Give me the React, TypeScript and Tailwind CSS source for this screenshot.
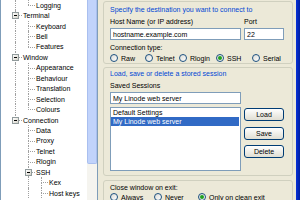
import React from 'react'

type Node = { t: string; l: number; exp?: boolean; last?: boolean; anc: boolean[] }

const tree: Node[] = [
  { t: 'Logging', l: 1, last: true, anc: [true] },
  { t: 'Terminal', l: 0, exp: true, anc: [] },
  { t: 'Keyboard', l: 1, anc: [true] },
  { t: 'Bell', l: 1, anc: [true] },
  { t: 'Features', l: 1, last: true, anc: [true] },
  { t: 'Window', l: 0, exp: true, anc: [] },
  { t: 'Appearance', l: 1, anc: [true] },
  { t: 'Behaviour', l: 1, anc: [true] },
  { t: 'Translation', l: 1, anc: [true] },
  { t: 'Selection', l: 1, anc: [true] },
  { t: 'Colours', l: 1, last: true, anc: [true] },
  { t: 'Connection', l: 0, exp: true, last: true, anc: [] },
  { t: 'Data', l: 1, anc: [false] },
  { t: 'Proxy', l: 1, anc: [false] },
  { t: 'Telnet', l: 1, anc: [false] },
  { t: 'Rlogin', l: 1, anc: [false] },
  { t: 'SSH', l: 1, exp: true, anc: [false] },
  { t: 'Kex', l: 2, anc: [false, true] },
  { t: 'Host keys', l: 2, anc: [false, true] },
]

function TreeRow({ n }: { n: Node }) {
  return (
    <div className="flex items-center h-[10.45px] pl-[7.5px]">
      {n.anc.map((on, i) => (
        <span key={i} className="relative w-[13px] h-full shrink-0">
          {on && <span className="absolute left-[6px] top-0 bottom-0 border-l border-dotted border-[#a0a0a0]" />}
        </span>
      ))}
      <span className="relative w-[13px] h-full shrink-0">
        <span className="absolute left-[6px] top-0 h-1/2 border-l border-dotted border-[#a0a0a0]" />
        {!n.last && <span className="absolute left-[6px] top-1/2 bottom-0 border-l border-dotted border-[#a0a0a0]" />}
        <span className="absolute left-[6px] right-0 top-[5px] border-t border-dotted border-[#a0a0a0]" />
        {n.exp && (
          <span className="absolute left-[3px] top-[2px] w-[7px] h-[7px] border border-[#919b9c] bg-linear-to-br from-white to-[#d6d3c8] flex items-center justify-center">
            <span className="w-[3px] h-px bg-black" />
          </span>
        )}
      </span>
      <span className="ml-[1.5px] whitespace-nowrap leading-none text-black">{n.t}</span>
    </div>
  )
}

function Radio({ on }: { on?: boolean }) {
  return (
    <span className="w-[8px] h-[8px] rounded-full border border-[#1c5180] bg-linear-to-br from-[#dcdcd6] to-white shrink-0 flex items-center justify-center">
      {on && <span className="w-[4px] h-[4px] rounded-full bg-[#21a121]" />}
    </span>
  )
}

function RadioItem({ label, on, w }: { label: string; on?: boolean; w: string }) {
  return (
    <div className={`flex items-center gap-[3px] shrink-0 ${w}`}>
      <Radio on={on} />
      <span className="whitespace-nowrap leading-none">{label}</span>
    </div>
  )
}

function Btn({ label }: { label: string }) {
  return (
    <div className="h-[13px] w-[40px] rounded-[3px] border border-[#003c74] bg-linear-to-b from-white to-[#e0ded3] flex items-center justify-center leading-none">
      {label}
    </div>
  )
}

export default function App() {
  return (
    <div className="w-[300px] h-[200px] overflow-hidden flex bg-[#ece9d8] text-[7px] text-black font-['Liberation_Sans',Arial,sans-serif]">
      {/* Tree */}
      <div className="w-[98px] h-full flex border-l border-r border-[#7f9db9] bg-white shrink-0">
        <div className="w-[86px] h-full overflow-hidden">
          {tree.map(n => (
            <TreeRow key={n.t} n={n} />
          ))}
        </div>
        <div className="w-[10px] h-full flex flex-col bg-[#f5f4ef]">
          <div className="h-[164px] rounded-b-[2px] border border-t-0 border-[#a9bfef] bg-[#c1d3fb]" />
        </div>
      </div>

      {/* Panel */}
      <div className="flex-1 flex flex-col pl-[5px] pr-[3px] pt-[1px]">
        <div className="h-[63px] shrink-0 rounded-[3px] border border-[#d0d0bf] px-[6px] pt-px">
          <div className="mt-[3px] h-[8px] leading-[8px] text-[#0046d5] whitespace-nowrap">
            Specify the destination you want to connect to
          </div>
          <div className="mt-[4px] h-[8px] leading-[8px] flex gap-[3px]">
            <span className="w-[131px]">Host Name (or IP address)</span>
            <span>Port</span>
          </div>
          <div className="mt-[2px] h-[12px] flex gap-[3px]">
            <div className="w-[131px] h-full border border-[#7f9db9] bg-white pl-[2px] flex items-center leading-none">
              hostname.example.com
            </div>
            <div className="w-[40px] h-full border border-[#7f9db9] bg-white pl-[2px] flex items-center leading-none">
              22
            </div>
          </div>
          <div className="mt-[4px] h-[8px] leading-[8px]">Connection type:</div>
          <div className="mt-px h-[10px] flex items-center">
            <RadioItem label="Raw" w="w-[35px]" />
            <RadioItem label="Telnet" w="w-[34px]" />
            <RadioItem label="Rlogin" w="w-[37px]" />
            <RadioItem label="SSH" on w="w-[36px]" />
            <RadioItem label="Serial" w="w-[30px]" />
          </div>
        </div>

        <div className="mt-[3px] h-[109px] shrink-0 rounded-[3px] border border-[#d0d0bf] px-[6px] pt-px">
          <div className="mt-[1px] h-[8px] leading-[8px] text-[#0046d5] whitespace-nowrap">
            Load, save or delete a stored session
          </div>
          <div className="mt-[4px] h-[8px] leading-[8px]">Saved Sessions</div>
          <div className="mt-[2px] h-[12px] w-[131px] border border-[#7f9db9] bg-white pl-[2px] flex items-center leading-none">
            My Linode web server
          </div>
          <div className="mt-[3px] flex gap-[3px]">
            <div className="w-[131px] h-[64px] border border-[#7f9db9] bg-white pt-[0.5px]">
              <div className="h-[8.5px] flex items-center pl-[2px] leading-none">Default Settings</div>
              <div className="h-[8.5px] flex items-center pl-[1px] mr-px leading-none bg-[#316ac5] text-white">
                <span className="pl-px">My Linode web server</span>
              </div>
            </div>
            <div className="flex flex-col pt-px gap-[5.5px]">
              <Btn label="Load" />
              <Btn label="Save" />
              <Btn label="Delete" />
            </div>
          </div>
        </div>

        <div className="mt-[4px] h-[30px] shrink-0 rounded-[3px] border border-[#d0d0bf] px-[6px] pt-px">
          <div className="mt-[2px] h-[8px] leading-[8px]">Close window on exit:</div>
          <div className="h-[10px] flex items-center">
            <RadioItem label="Always" w="w-[44px]" />
            <RadioItem label="Never" w="w-[44px]" />
            <RadioItem label="Only on clean exit" on w="w-[80px]" />
          </div>
        </div>
      </div>

      {/* Window frame */}
      <div className="w-[4px] h-full shrink-0 bg-linear-to-r from-[#0831d9] to-[#001ea0]" />
    </div>
  )
}
